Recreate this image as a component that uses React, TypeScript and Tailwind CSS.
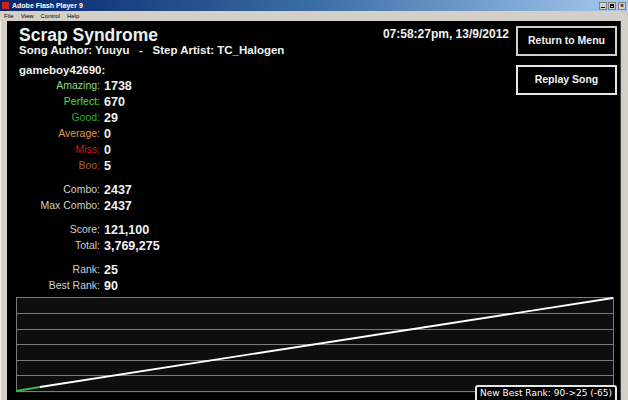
import React from "react";

type Stat = { label: string; value: string; color: string };

const judges: Stat[] = [
  { label: "Amazing:", value: "1738", color: "text-[#8fd87a]" },
  { label: "Perfect:", value: "670", color: "text-[#3ee03e]" },
  { label: "Good:", value: "29", color: "text-[#2ea82e]" },
  { label: "Average:", value: "0", color: "text-[#e09a4a]" },
  { label: "Miss:", value: "0", color: "text-[#d81616]" },
  { label: "Boo:", value: "5", color: "text-[#a3602c]" },
];

const groups: Stat[][] = [
  judges,
  [
    { label: "Combo:", value: "2437", color: "text-[#cfcfcf]" },
    { label: "Max Combo:", value: "2437", color: "text-[#cfcfcf]" },
  ],
  [
    { label: "Score:", value: "121,100", color: "text-[#cfcfcf]" },
    { label: "Total:", value: "3,769,275", color: "text-[#cfcfcf]" },
  ],
  [
    { label: "Rank:", value: "25", color: "text-[#cfcfcf]" },
    { label: "Best Rank:", value: "90", color: "text-[#cfcfcf]" },
  ],
];

const sans = "font-['Liberation_Sans',Arial,sans-serif]";

function TitleBar() {
  return (
    <div className="flex h-[11px] items-center bg-gradient-to-r from-[#0a246a] via-[#3a6ea5] to-[#a6caf0] pl-[2px] pr-[2px]">
      <div className="mr-[3px] h-[7px] w-[7px] bg-[#c8261b]" />
      <span className={`${sans} text-[7px] font-bold leading-none text-white`}>Adobe Flash Player 9</span>
      <div className="ml-auto flex gap-[1px]">
        <div className="flex h-[8px] w-[8px] items-end justify-center border border-[#808080] bg-[#d4d0c8] pb-[1px]">
          <div className="h-[1px] w-[4px] bg-black" />
        </div>
        <div className="mr-[1px] flex h-[8px] w-[8px] items-center justify-center border border-[#808080] bg-[#d4d0c8]">
          <div className="h-[4px] w-[4px] border border-t-2 border-black" />
        </div>
        <div className="flex h-[8px] w-[8px] items-center justify-center border border-[#808080] bg-[#d4d0c8] text-[7px] font-bold leading-none text-black">
          ×
        </div>
      </div>
    </div>
  );
}

function MenuBar() {
  return (
    <div className={`${sans} flex h-[10px] items-center gap-[7px] bg-[#d4d0c8] pl-[4px] text-[6px] leading-none text-black`}>
      <span>File</span>
      <span>View</span>
      <span>Control</span>
      <span>Help</span>
    </div>
  );
}

function StatRow({ s }: { s: Stat }) {
  return (
    <div className="flex h-[16px] items-center">
      <span className={`w-[94px] pr-[1px] text-right font-['Liberation_Sans',Arial,sans-serif] text-[10.5px] ${s.color}`}>
        {s.label}
      </span>
      <span className={`${sans} pl-[3px] text-[12.5px] font-bold text-[#f2f2f2]`}>{s.value}</span>
    </div>
  );
}

function ScoreChart() {
  const rows = [0, 16, 32, 47, 63, 78, 94];
  return (
    <svg width="598" height="96" viewBox="0 0 598 96" className="block">
      <rect x="0" y="0" width="598" height="96" fill="#0e0e0e" />
      {rows.map((y) => (
        <line key={y} x1="0" x2="598" y1={y + 0.5} y2={y + 0.5} stroke="#7a7a7a" strokeWidth="1" />
      ))}
      <line x1="0.5" x2="0.5" y1="0" y2="95" stroke="#7a7a7a" />
      <line x1="597.5" x2="597.5" y1="0" y2="95" stroke="#7a7a7a" />
      <polyline points="0,94 24,90" fill="none" stroke="#3bb84a" strokeWidth="1.8" />
      <polyline points="24,90 597,1" fill="none" stroke="#ffffff" strokeWidth="1.8" />
    </svg>
  );
}

export default function App() {
  return (
    <div className="flex h-[400px] w-[628px] flex-col overflow-hidden bg-[#d4d0c8]">
      <TitleBar />
      <MenuBar />
      <div className="flex min-h-0 flex-1">
        <div className="w-[7px] border-l border-[#f0f0f0] bg-[#d4d0c8]" />
        <main className="relative flex flex-1 flex-col bg-black text-[#eef2f2]">
          <div className="flex">
            {/* song info + judgement breakdown */}
            <div className="flex flex-col">
              <div className="flex flex-col pl-[12px]">
                <h1 className={`${sans} mt-[5px] text-[17.5px] font-bold leading-[18px] text-[#e9f0f0]`}>Scrap Syndrome</h1>
                <p className={`${sans} -mt-[1px] whitespace-pre text-[11.5px] font-bold leading-[14px]`}>
                  {"Song Author: Yuuyu   -   Step Artist: TC_Halogen"}
                </p>
                <p className={`${sans} mt-[6px] text-[11.5px] font-bold leading-[14px]`}>gameboy42690:</p>
              </div>
              <div className="mt-[1px] flex flex-col gap-[8px]">
                {groups.map((g, i) => (
                  <div key={i} className="flex flex-col">
                    {g.map((s) => (
                      <StatRow key={s.label} s={s} />
                    ))}
                  </div>
                ))}
              </div>
            </div>
            <div className={`${sans} ml-auto mt-[6px] text-[12px] font-bold leading-[14px]`}>07:58:27pm, 13/9/2012</div>
            <div className="ml-[7px] mr-[3px] mt-[5px] flex flex-col gap-[9px]">
              <button className={`${sans} h-[30px] w-[101px] border-2 border-[#cfcfcf] bg-black text-[10.5px] font-bold text-[#f2f2f2]`}>
                Return to Menu
              </button>
              <button className={`${sans} h-[30px] w-[101px] border-2 border-[#e8e8e8] bg-black text-[10.5px] font-bold text-[#f2f2f2]`}>
                Replay Song
              </button>
            </div>
          </div>

          <div className="ml-[9px] mt-[3px]">
            <ScoreChart />
          </div>

          <div className="absolute bottom-[-3px] right-[3px] rounded-[3px] border-2 border-[#e6e6e6] bg-black px-[3px] pb-[2px] font-['DejaVu_Sans',sans-serif] text-[9px] leading-[12px] text-white">
            New Best Rank: 90-&gt;25 (-65)
          </div>
        </main>
        <div className="w-[8px] border-l border-[#404040] bg-[#d4d0c8]" />
      </div>
    </div>
  );
}
